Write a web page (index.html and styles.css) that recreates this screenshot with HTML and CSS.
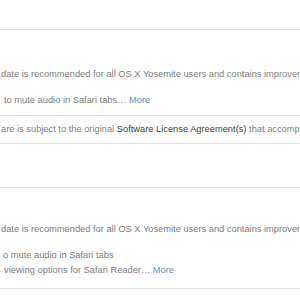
FILE: index.html
```html
<!DOCTYPE html>
<html lang="en">
<head>
    <meta charset="UTF-8">
    <title>Updates</title>
    <link rel="stylesheet" href="styles.css">
</head>
<body>

    <div class="lista">
        <!-- fim do item anterior -->
        <div class="item topo"></div>

        <!-- atualização 1 -->
        <div class="item update primeiro">
            <p class="descricao">date is recommended for all OS X Yosemite users and contains improvements</p>
            <ul class="notas">
                <li>to mute audio in Safari tabs… <a class="mais" href="#">More</a></li>
            </ul>
        </div>

        <div class="item licenca">
            <p>are is subject to the original <span class="forte">Software License Agreement(s)</span> that accompanied</p>
        </div>

        <div class="item vazio"></div>

        <!-- atualização 2 -->
        <div class="item update segundo">
            <p class="descricao">date is recommended for all OS X Yosemite users and contains improvements</p>
            <ul class="notas">
                <li class="recuo-a">o mute audio in Safari tabs</li>
                <li>viewing options for Safari Reader… <a class="mais" href="#">More</a></li>
            </ul>
        </div>
    </div>

</body>
</html>
```

FILE: styles.css
```css
body {
    margin: 0;
    font-family: "Liberation Sans", Arial, sans-serif;
    font-size: 9.3px;
    line-height: 15px;
    color: #808080;
    background-color: #fff;
}

.lista {
    width: 300px;
    overflow: hidden;
}

/* Cada linha da lista com separador */
.item {
    border-bottom: 1px solid #e0e0e0;
    white-space: nowrap;
    overflow: hidden;
}

.topo {
    height: 29px;
}

p {
    margin: 0;
}

.descricao {
    padding-left: 1px;
}

.notas {
    list-style: none;
    margin: 11px 0 0 0;
    padding: 0 0 0 4px;
}

.recuo-a {
    margin-left: -1px;
}

.primeiro {
    padding: 37px 0 7px 0;
}

.segundo {
    padding: 34px 0 10px 0;
}

.licenca {
    padding: 6px 0 6px 1px;
}

.vazio {
    height: 43px;
}

.forte {
    color: #444;
}

.mais {
    color: #6f8cc4;
    text-decoration: none;
}
```
